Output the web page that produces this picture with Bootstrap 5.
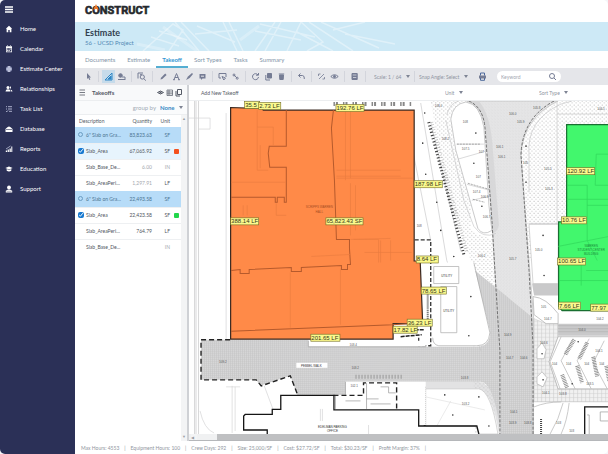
<!DOCTYPE html>
<html lang="en">
<head>
<meta charset="utf-8">
<meta name="viewport" content="width=device-width, initial-scale=1">
<title>Construct – Takeoff</title>
<link href="https://cdn.jsdelivr.net/npm/bootstrap@5.3.0/dist/css/bootstrap.min.css" rel="stylesheet">
<style>
body{font-family:Lato,"Liberation Sans",sans-serif;font-size:6px;line-height:8px;color:#555a66;background:#f4f5f8}
button{font:inherit;color:inherit;border:0;background:none;padding:0}
svg{display:block}
a{text-decoration:none}
.shell{border-radius:5px;background:#fff}
.side{flex:0 0 75px;background:#2b3057;color:#e9ebf5}
.burger{height:19px;padding-left:5px}
.side .nav-link{height:20px;padding:0 0 0 5px;gap:7px;color:#fff}
.side .nav-link svg{width:8px;height:8px;fill:currentColor;flex:none}
.brand-row{height:22px;padding-left:10px}
.logo{font:700 11px/16px Roboto,"Liberation Sans",sans-serif;color:#25282d;-webkit-text-stroke:.6px #25282d}
.flame{left:8px;top:1px}
.banner{height:29px;padding:5px 10px;background:#cde9f6}
.banner svg{left:0;top:0}
.banner h1{font-size:9px;line-height:11px;font-weight:700;color:#33404e;margin:0}
.crumb{font-size:6px;line-height:9px;color:#5288b5}
.tabs{height:17px;padding-left:4px}
.tabs .nav-link{padding:4px 6px 0;font-size:6px;line-height:9px;color:#8294a8;border-bottom:2px solid transparent}
.tabs .nav-link.active{color:#3295d2;border-color:#55aed2;font-weight:700}
.tools{height:17px;padding-left:7px;background:#e5e6ea;color:#757c94}
.tools button{width:13px;height:13px;flex:none;display:flex;align-items:center;justify-content:center}
.tools button.active{background:#c6dbea;color:#2c86c6}
.tools svg,.mini svg{width:9px;height:9px;fill:none;stroke:currentColor;stroke-width:1}
.tools .f,.mini .f{fill:currentColor}
.sep{flex:none;width:1px;height:11px;margin:0 3px;background:#d3d5dc}
.sep.wide{margin:0 4px}
.pick{display:inline-flex;align-items:center;gap:4px;color:#8f94a1}
.tools .pick,.map-head{font-size:5px}
.pick::after{content:"";border:2px solid transparent;border-top:3px solid #7e8494;border-bottom:0}
.pick select{appearance:none;border:0;background:none;padding:0;font:inherit;color:inherit}
.sort-pick{margin:0 40px 0 76px}
.find{width:64px;height:11px;background:#fff;border-radius:6px;padding:0 4px}
.find input{border:0;outline:0;background:none;min-width:0;padding:0;font:inherit;font-size:5px;color:#777}
.find input::placeholder{color:#a4a7b1}
.list-pane{flex:0 0 114px;border-right:2px solid #cfd1d5}
.pane-head{height:16px;background:#f8f9fa;border-bottom:1px solid #eceef0}
.group-row{height:14px;background:#fafbfc;border-bottom:1px solid #eceef0;padding-right:4px;color:#a2abb5}
.group-row .pick{color:#3689c5;font-weight:700}
.grid-list{table-layout:fixed;font-size:5px;line-height:8px}
.grid-list th{height:12px;padding:0;font-weight:400;color:#555b66}
.grid-list td{height:16px;padding:0;border-top:1px solid #eef0f2;color:#4f5560;white-space:nowrap}
.grid-list .grp td{background:#b7dcf8;color:#4c7493;border-color:#b7dcf8}
.grid-list .on td{background:#e7f4fd}
.grid-list .dim{color:#a4a8ae}
.c-desc{width:48px}.c-qty{width:29px}.c-unit{width:18px}
.grid-list .ind{padding-left:11px}
.tick{width:6px;height:6px;margin:0 2px 0 3px;vertical-align:-1px;accent-color:#1879d0}
.ring{display:inline-block;width:5px;height:5px;border:1px solid #6a9cc2;border-radius:50%;margin:0 3px 0 3px}
.chip{display:block;width:5px;height:5px;background:#f4511e;border-radius:1px}
.chip.green{background:#22d64c}
.vbar{flex:0 0 6px;background:#f3f4f5;color:#9b9ea4;font-size:4px;line-height:8px}
.hbar{height:7px;background:#f0f1f2;border-bottom:1px solid #b5b7ba;padding-left:2px}
.thumb{margin-left:20px;background:#bfc0c2}
.plan-wrap{min-height:0}
.foot{height:13px;padding-left:6px;gap:5px;font-size:5px;line-height:15px;color:#8f959e}
.plan{font-family:"Liberation Sans",Arial,sans-serif}
.plan .tag text{font-size:6px;fill:#33361a}
.plan .tag rect{fill:#fbf98d;stroke:#716c24;stroke-width:.6}
.plan .note{font-size:3px;fill:#333}
.plan .spot{font-size:3px;fill:#555}
</style>
<script src="https://cdn.jsdelivr.net/npm/bootstrap@5.3.0/dist/js/bootstrap.bundle.min.js"></script>
</head>
<body>
<div class="shell d-flex vh-100 overflow-hidden">
<aside class="side d-flex flex-column">
  <button class="burger text-start" aria-label="Menu"><svg width="8" height="7"><path d="M0 1H8M0 3.5H8M0 6H8" stroke="#fff" stroke-width="1.3"/></svg></button>
  <nav class="nav flex-column">
    <a class="nav-link d-flex align-items-center" href="#"><svg viewBox="0 0 8 8"><path d="M4 .8L.8 3.8H1.6V7.2H3.3V5H4.7V7.2H6.4V3.8H7.2Z"/></svg>Home</a>
    <a class="nav-link d-flex align-items-center" href="#"><svg viewBox="0 0 8 8"><path fill-rule="evenodd" d="M1 1.3H7V7.2H1ZM1.7 3V6.5H6.3V3ZM2 .5H3V1.5H2ZM5 .5H6V1.5H5Z"/><path d="M2.2 3.5h1v1h-1zM3.7 3.5h1v1h-1zM5.1 3.5h1v1h-1zM2.2 5.1h1v1h-1zM3.7 5.1h1v1h-1z"/></svg>Calendar</a>
    <a class="nav-link d-flex align-items-center" href="#"><svg viewBox="0 0 8 8"><circle cx="4" cy="4" r="3" fill="#8f95b9"/><path d="M1 4H7M4 1V7M4 1Q1 4 4 7M4 1Q7 4 4 7" fill="none" stroke="#dfe2f2" stroke-width=".5"/></svg>Estimate Center</a>
    <a class="nav-link d-flex align-items-center" href="#"><svg viewBox="0 0 8 8"><circle cx="3" cy="2.5" r="1.5"/><path d="M.5 6.5Q.5 4.3 3 4.3T5.5 6.5ZM5 1.2a1.4 1.4 0 0 1 0 2.7ZM5.4 4.4Q7.5 4.6 7.5 6.5H6.2Z"/></svg>Relationships</a>
    <a class="nav-link d-flex align-items-center" href="#"><svg viewBox="0 0 8 8"><path d="M1 1.7H2M1 4H2M3 1.7H7M3 4H7M4 6.3H7M1 6l.8.8L3 5.4" fill="none" stroke="#cdd1e8" stroke-width=".8"/></svg>Task List</a>
    <a class="nav-link d-flex align-items-center" href="#"><svg viewBox="0 0 8 8"><path d="M1.5 3Q4 0 6.5 3L7.5 4V7H.5V4ZM1 4.3H7" /><path d="M1 4.5H7" stroke="#2b3057" stroke-width=".6"/></svg>Database</a>
    <a class="nav-link d-flex align-items-center" href="#"><svg viewBox="0 0 8 8"><path d="M.8 7V5.5H2V7ZM2.6 7V4.6H3.9V7ZM4.5 7V3.5H5.8V7ZM6.3 7V1.5H7.3V7Z"/><path d="M1 4L5.5 1" stroke="#cdd1e8" stroke-width=".7"/></svg>Reports</a>
    <a class="nav-link d-flex align-items-center" href="#"><svg viewBox="0 0 8 8"><path d="M.3 3L4 1.4 7.7 3 4 4.6ZM1.7 4.1L4 5.1 6.3 4.1V5.8Q4 7.2 1.7 5.8Z"/></svg>Education</a>
    <a class="nav-link d-flex align-items-center" href="#"><svg viewBox="0 0 8 8"><circle cx="4" cy="2.4" r="1.9"/><path d="M.8 7.5V5.8L3 4.5H5L7.2 5.8V7.5Z"/><path d="M1.5 6.3H6.5" stroke="#2b3057" stroke-width=".4"/></svg>Support</a>
  </nav>
</aside>
<main class="d-flex flex-column flex-grow-1 overflow-hidden">
  <header class="brand-row d-flex align-items-center"><div class="logo position-relative">CONSTRUCT<svg class="flame position-absolute" width="6" height="7"><path d="M3 0L3.800 2Q5.500 3.500 5.500 6L3 4.800.5 6Q.5 3.500 2.200 2Z" fill="#ee7624"/></svg></div></header>
  <section class="banner position-relative overflow-hidden">
    <svg class="position-absolute" width="400" height="29" fill="none" stroke="#fff" stroke-opacity=".38" stroke-width="1.5"><path d="M68 29L98 2 108 8 94 29M76 15L104 24M84 9L112 18M100 0L124 29M106 0L134 29M122 4L160 20M120 12L162 8M148 0L162 29M154 0L168 29M200 0L180 29M206 0L190 29M180 9L226 18M185 2L240 15M212 29L226 0 248 20 232 29M222 10L258 29M234 0L278 29M246 0L304 26M258 8L290 0M270 12L320 22"/><path d="M88 5L122 29M62 22L90 28M165 18L184 4" stroke-width="3" stroke-opacity=".25"/></svg>
    <div class="position-relative"><h1>Estimate</h1><div class="crumb">56 - UCSD Project</div></div>
  </section>
  <nav class="tabs nav flex-nowrap">
    <a class="nav-link" href="#">Documents</a><a class="nav-link" href="#">Estimate</a><a class="nav-link active" href="#" aria-current="page">Takeoff</a><a class="nav-link" href="#">Sort Types</a><a class="nav-link" href="#">Tasks</a><a class="nav-link" href="#">Summary</a>
  </nav>
  <div class="tools d-flex align-items-center">
    <button aria-label="Select"><svg viewBox="0 0 9 9"><path class="f" stroke="none" d="M3 1V7L4.3 5.8 5.3 8 6.3 7.5 5.3 5.4H7Z"/></svg></button><span class="sep"></span>
    <button class="active" aria-label="Area"><svg viewBox="0 0 9 9"><path d="M1 8L8 1V8Z"/><path class="f" d="M4 7L7 4V7Z"/></svg></button>
    <button aria-label="Shape"><svg viewBox="0 0 9 9"><circle class="f" cx="3.5" cy="3.5" r="1.8"/><path d="M1 7.5H8.5M5 5h3v2"/></svg></button><span class="sep"></span>
    <button aria-label="Zoom"><svg viewBox="0 0 9 9"><path d="M1 6.5V1H6M3 2.7h2"/><circle cx="5.3" cy="5" r="2.1"/><path d="M7 6.7L8.7 8.7"/></svg></button><span class="sep wide"></span>
    <button aria-label="Pen"><svg viewBox="0 0 9 9"><path d="M1.5 7.5L2 5.8 6.2 1.5 7.6 2.9 3.3 7.1Z" class="f" stroke="none"/></svg></button>
    <button aria-label="Text"><svg viewBox="0 0 9 9"><path d="M2 7.5L4.5 1.5 7 7.5M3 5.5H6M1 7.7H3M6 7.7H8"/></svg></button>
    <button aria-label="Line"><svg viewBox="0 0 9 9"><path d="M1 8L3 4.5 7 1 8 2 4.7 6Z" class="f" stroke="none"/></svg></button>
    <button aria-label="Note"><svg viewBox="0 0 9 9"><path class="f" stroke="none" d="M1.5 2H7.5V6.5H4.5L3 8V6.5H1.5Z"/><path d="M3 4.2H6" stroke="#e5e6ea"/></svg></button><span class="sep"></span>
    <button aria-label="Region"><svg viewBox="0 0 9 9"><path d="M3 6H1V1.5H8V5M4 4.5L7.5 6 5.8 8Z"/></svg></button>
    <button aria-label="Link"><svg viewBox="0 0 9 9"><circle cx="3" cy="3" r="1"/><circle cx="6.2" cy="6.2" r="1"/><path d="M3 3L6 6"/></svg></button><span class="sep"></span>
    <button aria-label="Rotate"><svg viewBox="0 0 9 9"><path d="M7 3A3 3 0 1 0 7.5 5M5 3.2H7.5V1"/></svg></button>
    <button aria-label="Copy"><svg viewBox="0 0 9 9"><path class="f" d="M3.5 1.5H7.5V6H3.5Z"/><path d="M1.8 3V8H6"/></svg></button>
    <button aria-label="Delete"><svg viewBox="0 0 9 9"><path class="f" d="M2.5 3H6.5L6.2 7.5H2.8ZM1.8 2H7.2"/></svg></button><span class="sep"></span>
    <button aria-label="Undo"><svg viewBox="0 0 9 9"><path d="M3.5 1.5L1.5 3.5 3.5 5.5M1.8 3.5H5.5Q7.7 3.7 7.3 7"/></svg></button><span class="sep"></span>
    <button aria-label="Unlink"><svg viewBox="0 0 9 9"><path d="M1.500 4V2H3.500M7.500 5V7H5.500M2 7L7 2" stroke-width=".8"/></svg></button>
    <button aria-label="Show"><svg viewBox="0 0 9 9"><path d="M.8 4.5Q4.5 1 8.2 4.5 4.5 8 .8 4.5Z"/><circle class="f" cx="4.5" cy="4.5" r="1"/></svg></button><span class="sep"></span>
    <button aria-label="Calculator"><svg viewBox="0 0 9 9"><path class="f" d="M2 1.5H7.2V7.5H2Z"/><path d="M2.7 3H6.5M3 5.5H6.3" stroke="#d8dae2" stroke-width=".8"/></svg></button><span class="sep wide"></span>
    <label class="pick ms-1"><select aria-label="Scale"><option>Scale: 1 / 64</option></select></label><span class="sep wide"></span>
    <label class="pick"><select aria-label="Snap angle"><option>Snap Angle: Select</option></select></label>
    <button class="mx-2" aria-label="Print"><svg viewBox="0 0 9 9"><path class="f" stroke="none" d="M1 3.5H8V6.5H1Z"/><path d="M2.5 3.5V1H6.5V3.5M2.5 6V8.3H6.5V6" stroke="#4d699c"/></svg></button>
    <label class="find d-flex align-items-center"><input class="flex-grow-1" type="search" placeholder="Keyword" aria-label="Keyword"><svg class="flex-shrink-0" viewBox="0 0 9 9"><circle cx="4" cy="4" r="2.5"/><path d="M6 6L8 8"/></svg></label>
  </div>
  <div class="d-flex flex-grow-1 overflow-hidden">
    <section class="list-pane d-flex flex-column">
      <div class="pane-head mini d-flex align-items-center px-1"><svg class="me-1" viewBox="0 0 9 9"><path d="M.5 2H6M.5 4.500H6M.5 7H6" stroke-width=".8"/></svg><span class="fw-bold me-auto">Takeoffs</span>
        <button aria-label="Visibility"><svg viewBox="0 0 9 9"><path d="M1.500 4.500Q4.500 1.500 7.500 4.500 4.500 7.500 1.500 4.500Z"/><circle class="f" cx="4.5" cy="4.5" r=".6"/></svg></button><button aria-label="List"><svg viewBox="0 0 9 9"><path d="M2 2H7.5V7.5H2ZM2 4H7.5M2 5.8H7.5M4 2V7" stroke-width=".7"/></svg></button><button aria-label="Duplicate"><svg viewBox="0 0 9 9"><path d="M3.5 1.5H7.5V6.5H3.5ZM2 3V8H6"/></svg></button></div>
      <div class="group-row d-flex align-items-center justify-content-end gap-1"><label for="grp">group by</label><span class="pick"><select id="grp"><option>None</option></select></span></div>
      <div class="d-flex flex-grow-1">
        <div class="flex-grow-1">
        <table class="grid-list w-100">
          <thead><tr><th class="c-desc ps-1">Description</th><th class="c-qty text-end">Quantity</th><th class="c-unit text-end">Unit</th><th></th></tr></thead>
          <tbody>
          <tr class="grp"><td><span class="ring"></span>6" Slab on Gra…</td><td class="text-end">83,823.63</td><td class="text-end">SF</td><td></td></tr>
          <tr class="on"><td><input class="tick" type="checkbox" checked aria-label="Slab_Area, orange">Slab_Area</td><td class="text-end">67,065.92</td><td class="text-end">SF</td><td class="ps-1"><span class="chip"></span></td></tr>
          <tr><td class="ind">Slab_Base_De…</td><td class="text-end dim">6.00</td><td class="text-end dim">IN</td><td></td></tr>
          <tr><td class="ind">Slab_AreaPeri…</td><td class="text-end dim">1,297.91</td><td class="text-end">LF</td><td></td></tr>
          <tr class="grp"><td><span class="ring"></span>6" Slab on Gra…</td><td class="text-end">22,493.58</td><td class="text-end">SF</td><td></td></tr>
          <tr><td><input class="tick" type="checkbox" checked aria-label="Slab_Area, green">Slab_Area</td><td class="text-end">22,423.58</td><td class="text-end">SF</td><td class="ps-1"><span class="chip green"></span></td></tr>
          <tr><td class="ind">Slab_AreaPeri…</td><td class="text-end">764.79</td><td class="text-end">LF</td><td></td></tr>
          <tr><td class="ind">Slab_Base_De…</td><td></td><td class="text-end dim">IN</td><td></td></tr>
          </tbody>
        </table></div>
        <div class="vbar d-flex flex-column justify-content-between align-items-center"><span>▲</span><span>▼</span></div>
      </div>
    </section>
    <section class="d-flex flex-column flex-grow-1 overflow-hidden">
      <div class="pane-head map-head bg-white d-flex align-items-center"><button class="ms-2 ps-1">Add New Takeoff</button><label class="pick ms-auto"><select aria-label="Unit"><option>Unit</option></select></label><label class="pick sort-pick"><select aria-label="Sort type"><option>Sort Type</option></select></label></div>
      <div class="plan-wrap flex-grow-1 overflow-hidden">
      <svg class="plan w-100 h-100" viewBox="189 101 419 332" preserveAspectRatio="xMinYMin slice" role="img" aria-label="Site plan">
        <defs>
          <pattern id="grid" width="2" height="2" patternUnits="userSpaceOnUse"><rect width="2" height="2" fill="#d8d8d9"/><path d="M0 .5H2M.5 0V2" stroke="#c2c2c3" stroke-width=".5"/></pattern>
          <pattern id="pave" width="4" height="4" patternUnits="userSpaceOnUse"><rect width="4" height="4" fill="#f1f1f1"/><path d="M0 .5H4M.5 0V4" stroke="#ccc" stroke-width=".5"/></pattern>
          <pattern id="dots" width="4" height="4" patternUnits="userSpaceOnUse"><path d="M.5 1h1M2.500 3h1" stroke="#aaa" stroke-width=".8"/></pattern>
          <pattern id="sand" width="3" height="3" patternUnits="userSpaceOnUse"><rect width="3" height="3" fill="#e5e5e6"/><path d="M1 1h.6M2 2.4h.6" stroke="#d0d0d0" stroke-width=".6"/></pattern>
        </defs>
        <path fill="#fff" d="M189 101H708V533H189Z"/>
        <g fill="none" stroke="#d4d4d5" stroke-width=".7"><path d="M194.500 101V433M196 101V433M198.500 101V433" stroke="#c9c9ca"/><path d="M189 118H210V129H198M226 113V339M232 385V432M235 386V430M226 386H240M264 385L273 409M200 410Q204 428 214 432M320 408V420M322 408V420M368 409V433"/></g>
        <path fill="url(#dots)" d="M430 101H470V230L478 234 494 240V433H474L470 260 448 200Z"/>
        <path fill="url(#dots)" d="M530 112L560 101H608V125H566V221H557V260H528L520 150Z"/>
        <!-- roads -->
        <path fill="url(#sand)" stroke="#aaa" stroke-width=".5" d="M466 101Q483 108 485 130L491 220 495 290 533 322 528 260 520 155Q522 118 557 101Z"/>
        <path fill="#d3d3d4" opacity=".7" d="M468 101H478Q490 115 492 150L498 225Q496 233 491 232L484 130Q482 110 468 101Z"/>
        <path fill="url(#grid)" d="M201 339H308V346H478Q490 344 489 330L474 270 495 287 533 318V434H500Q493 382 480 381H345V394H297L290 375 260 385 256 379H201Z"/>
        <path fill="#cfcfd0" opacity=".6" d="M400 381H478Q495 383 502 433H498Q491 390 478 388H424V381Z"/>
        <path fill="url(#pave)" stroke="#bbb" stroke-width=".4" d="M533 318L545 323H557V336L548 361 557 388H608V401H533Z"/>
        <path fill="#c9c9ca" d="M531 283H557V295H533ZM557 323H608V335H557Z"/>
        <path d="M557 325H608M557 328H608M557 331H608" stroke="#aaa" stroke-width=".5"/>
        <g fill="none" stroke="#666" stroke-width=".9" stroke-dasharray="3 1.500"><path d="M468 101Q482 107 484 127L491 220 497 320 499 350V433"/><path d="M553 101Q521 118 520 155L528 270 532 345V433"/></g>
        <!-- planting islands -->
        <path fill="#fff" stroke="#b5b5b6" stroke-width=".7" d="M450 119Q452 104 465 102 479 104 483 127L488 205 491 230Q482 236 477 228L455 150Z"/>
        <g fill="none" stroke="#c2c2c3" stroke-width=".6"><path d="M446 115Q449 103 458 101M445 120L463 200 473 226Q482 239 495 233M456 144H483M457 159L485 151M466 184L489 190M471 200L489 196M412 150L430 240M420 103L446 260 480 350M528 192V155Q525 120 560 104L571 101M556 101V225M556 114H608M528 223H557M533 275L557 275M430 122L460 251"/><path d="M456 144H480M467 183L488 189M472 199L484 202" stroke="#777" stroke-dasharray="2 1"/></g>
        <path fill="#fff" stroke="#bbb" stroke-width=".6" d="M528 224H557V283H532Z"/>
        <path d="M428 122L463 254" stroke="#444" stroke-width="3" stroke-dasharray="1.200 2.100"/>
        <path d="M431 122L466 252" stroke="#aaa" stroke-width="3" stroke-dasharray=".6 2"/>
        <path fill="#fff" d="M434 262H472L489 330Q490 344 478 345H433Z"/>
        <path fill="none" stroke="#aaa" stroke-width=".7" d="M433 266H458V283H433ZM440 286H456V332H440ZM473 262L489 332Q488 345 476 345H438Q432 344 432 337"/>
        <path fill="none" stroke="#333" stroke-width="1.300" stroke-dasharray="4 2" d="M414 239.500H430V345H418V337"/>
        <path d="M427 293V325" stroke="#555" stroke-width="2" stroke-dasharray="1 1"/>
        <path d="M400 336L421 334M414 329H424" stroke="#222" stroke-width="1.500" stroke-dasharray="4 1"/>
        <!-- terrace -->
        <path fill="#fff" stroke="#aaa" stroke-width=".7" d="M557 336H608V388H557L548 361ZM532 296Q545 297 557 313V323H545L533 314Z"/>
        <path fill="none" stroke="#b4b4b5" stroke-width=".7" d="M560 336L549 361 559 388M572 338L560 360 574 388M588 338L576 360 590 388M603 340L592 362 606 388M533 406Q545 401 560 401M562 402Q558 418 549 433M568 402Q566 420 560 433"/>
        <path fill="none" stroke="#888" stroke-width="4" stroke-dasharray=".8 .8" d="M573 339L564 354M586 342L578 358M592 356L596 376M561 374L566 387M576 365L581 382M605 365L608 380"/>
        <path fill="#fff" stroke="#aaa" stroke-width=".6" d="M536 348L541 342 545 349 543 358H536ZM536 376L541 371 546 377 542 386 536 383Z"/>
        <path fill="#fff" stroke="#bbb" stroke-width=".6" d="M425 388H478Q490 390 497 433H478L475 425H425Z"/>
        <path d="M424 386V425M540 418V433" stroke="#444" stroke-width="2" stroke-dasharray="1 1"/>
        <path d="M425 396L484 409M436 425L450 400" stroke="#ddd" stroke-width=".6"/>
        <!-- lower buildings -->
        <path fill="#fff" d="M308 340H425V346H308ZM345 381H425V424H345Z"/>
        <path fill="none" stroke="#999" stroke-width=".7" d="M308 340V346H425M345 381V394M366 382V408M366 398H378M380 386H388V392H395M335 394V408M345 400H360M370 403H390"/>
        <path fill="none" stroke="#999" stroke-width="4" stroke-dasharray="1 2" d="M355 376H402"/>
        <path fill="none" stroke="#222" stroke-width="1.400" stroke-dasharray="5 3" d="M230 339H201V379H256L261 385 290 375 297 393M333 394.500H363V382H396V408"/>
        <path fill="none" stroke="#151515" stroke-width="1.300" d="M267 433V429H243.500V415L245 413.500H272V408.500H280.500V394.500H333.500V409H418V425H476L478 433M583.500 433V406H608"/>
        <path fill="none" stroke="#999" stroke-width=".7" d="M599 411H608V420H599ZM586 414H588V433"/>
        <path d="M296 362H327V367H296Z" fill="#fff"/>
        <!-- takeoff areas -->
        <path fill="#ff8a48" stroke="#3b2a22" stroke-width="1.200" d="M230.500 107.500L262 108.500 263 110H413.500V260.500H419.500L422 323H392.500V338.500H230.500Z"/>
        <g fill="none" stroke="#b65a2c" stroke-width="1"><path d="M286 110V146H269L268 153 269.500 167H286V202H284V197H277V202H275V197H231"/><path d="M333 110L331 128 334 180 336 239H349V248L350 264H347V269H341V265L301 267V271H291V267L249 269V273H240V269L231 270M231 330.500L392 324 422 322"/></g>
        <g fill="none" stroke="#e87b3f" stroke-width=".6"><path d="M257 110V170H268M257 127H273V145M260 145V168M276 203V215H286M231 182H285M345 110V180M350 110V178M336 170H400M336 176H400M336 178H412M350 183V235M355 185V230M353 239H378V262M380 240V262M390 240V260M311 256L350 254M290 272V327M340 268V324M350 239L390 238M364 252H411M243 205V215M247 205V215"/></g>
        <path fill="#42f76d" stroke="#196f31" stroke-width="1.200" d="M608 124.500H565.500V221.500H557.500V306L561 310H608"/>
        <path fill="none" stroke="#31d75a" stroke-width=".7" d="M566 185H586V205H608M566 199H608M557 246L608 236M595 154H608V185H594ZM586 205V240L596 260M570 260H580V285M585 270H608M558 280H608"/>
        <g font-size="3" fill="#a74d24" text-anchor="middle"><text x="319" y="208">SCRIPPS WARREN</text><text x="319" y="213">HALL</text></g>
        <g font-size="3" fill="#198b38" text-anchor="middle"><text x="590" y="247">WARREN</text><text x="590" y="251">STUDENT CENTER</text><text x="590" y="255">BUILDING</text></g>
        <g class="note" text-anchor="middle"><text x="311" y="366">PEBBEL WALK</text><text x="332" y="427">EDELMAN PARKING</text><text x="332" y="431">OFFICE</text><text x="446" y="276">UTILITY</text><text x="448" y="311">UTILITY</text></g>
        <g class="spot"><text x="219" y="362">109.2</text><text x="349" y="345">103.4</text><text x="351" y="368">103.2</text><text x="350" y="386">102.1</text><text x="434" y="107">108.0</text><text x="462" y="123">108</text><text x="441" y="140">108.2</text><text x="461" y="150">107.5</text><text x="478" y="153">107</text><text x="495" y="148">106.1</text><text x="497" y="158">106.1</text><text x="508" y="115">106.0</text><text x="516" y="123">105.9</text><text x="532" y="109">105.8</text><text x="596" y="110">104.5</text><text x="475" y="178">107</text><text x="472" y="193">107.4</text><text x="480" y="198">106.9</text><text x="482" y="218">106.7</text><text x="543" y="170">105.5</text><text x="544" y="190">105.3</text><text x="522" y="164">105</text><text x="416" y="227">108</text><text x="477" y="257">106.2</text><text x="508" y="260">105.7</text><text x="534" y="251">105.0</text><text x="503" y="335">104.9</text><text x="505" y="358">104.7</text><text x="519" y="358">104.6</text><text x="460" y="378">103.8</text><text x="461" y="404">103.2</text><text x="509" y="412">104.1</text><text x="508" y="423">103.9</text><text x="523" y="423">103.8</text><text x="540" y="307">105</text><text x="543" y="319">104.7</text><text x="577" y="330">104.0</text><text x="595" y="319">104.2</text><text x="594" y="351">104.1</text><text x="551" y="364">104</text><text x="565" y="364">104</text><text x="583" y="364">104</text><text x="598" y="364">104</text><text x="585" y="384">103.5</text><text x="541" y="393">104.1</text><text x="558" y="394">103.8</text><text x="555" y="423">103</text><text x="568" y="431">103</text><text x="539" y="343">104.6</text></g>
        <path d="M333 104H411" stroke="#888" stroke-width="4" stroke-dasharray="1.500 1 2 5"/>
        <path stroke="#333" stroke-width="1.600" stroke-linecap="round" d="M424 113h0M422 143h0M425 174h0M436 202h0M440 230h0M453 256h0M473 163h0M475 133h0M481 206h0M470 296h0M468 335h0M444 394h0M478 396h0M452 414h0M488 425h0M525 146h0M525 182h0M542 235h0M543 275h0M541 353h0M542 379h0M571 383h0M577 341h0"/>
        <!-- measurements -->
        <g class="tag">
          <g><rect x="244.500" y="101.500" width="15" height="7"/><text x="245" y="107">35.5</text></g>
          <g><rect x="258.500" y="102.500" width="22" height="7"/><text x="259" y="108">2.73 LF</text></g>
          <g><rect x="335.500" y="104.500" width="28" height="7"/><text x="336" y="110">192.76 LF</text></g>
          <g><rect x="413.500" y="180.500" width="28" height="7"/><text x="414" y="186">187.98 LF</text></g>
          <g><rect x="230.500" y="217.500" width="28" height="7"/><text x="231" y="223">388.14 LF</text></g>
          <g><rect x="325.500" y="217.500" width="37" height="7"/><text x="326" y="223">65,823.43 SF</text></g>
          <g><rect x="415.500" y="255.500" width="22" height="7"/><text x="416" y="261">8.64 LF</text></g>
          <g><rect x="420.500" y="286.500" width="25" height="7"/><text x="421" y="292">78.65 LF</text></g>
          <g><rect x="406.500" y="318.500" width="25" height="7"/><text x="407" y="324">36.23 LF</text></g>
          <g><rect x="392.500" y="325.500" width="24" height="7"/><text x="393" y="331">17.82 LF</text></g>
          <g><rect x="310.500" y="333.500" width="29" height="7"/><text x="311" y="339">201.65 LF</text></g>
          <g><rect x="565.500" y="167.500" width="28" height="7"/><text x="566" y="173">120.92 LF</text></g>
          <g><rect x="560.500" y="216.500" width="25" height="7"/><text x="561" y="222">10.76 LF</text></g>
          <g><rect x="556.500" y="257.500" width="28" height="7"/><text x="557" y="263">100.65 LF</text></g>
          <g><rect x="557.500" y="301.500" width="22" height="7"/><text x="558" y="307">7.66 LF</text></g>
          <g><rect x="589.500" y="303.500" width="26" height="7"/><text x="590" y="309">77.97</text></g>
        </g>
      </svg></div>
      <div class="hbar d-flex align-items-stretch"><span class="vbar">◀</span><span class="thumb flex-grow-1"></span></div>
    </section>
  </div>
  <footer class="foot d-flex text-nowrap"><span>Max Hours: 4553</span><span>|</span><span>Equipment Hours: 100</span><span>|</span><span>Crew Days: 292</span><span>|</span><span>Size: 25,000/SF</span><span>|</span><span>Cost: $27.72/SF</span><span>|</span><span>Total: $30.23/SF</span><span>|</span><span>Profit Margin: 37%</span><span>|</span></footer>
</main>
</div>
</body>
</html>
